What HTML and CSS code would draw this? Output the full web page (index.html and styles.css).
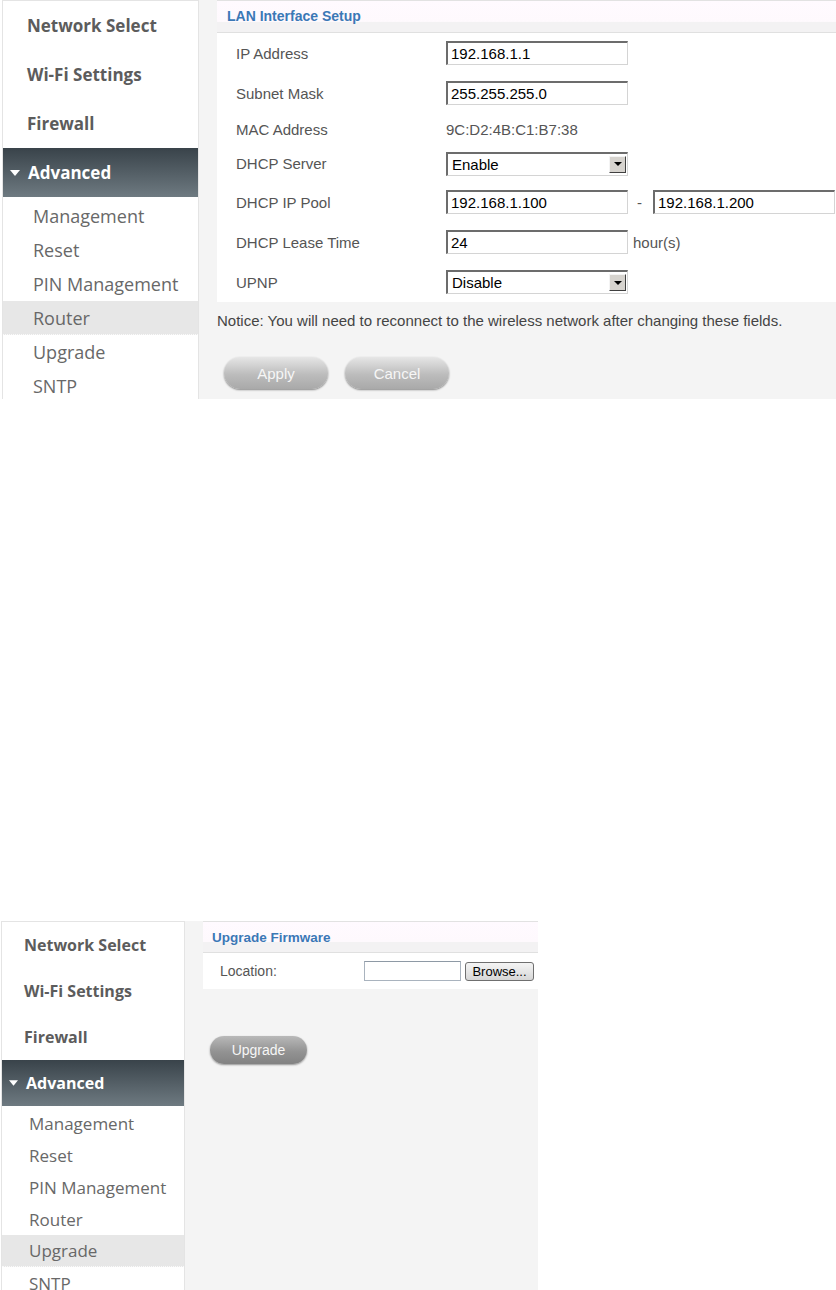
FILE: index.html
```html
<!DOCTYPE html>
<html lang="en">

<head>
    <meta charset="UTF-8">
    <meta name="viewport" content="width=device-width, initial-scale=1.0">
    <title>Router Settings</title>
    <link rel="stylesheet" href="styles.css">
</head>

<body>
    <!-- router / LAN settings page -->
    <div class="shot router">
        <nav class="sidebar">
            <a class="nav-main">Network Select</a>
            <a class="nav-main">Wi-Fi Settings</a>
            <a class="nav-main">Firewall</a>
            <div class="nav-group">
                <svg class="caret" viewBox="0 0 10 6"><polygon points="0,0 10,0 5,6" fill="#fff" /></svg>
                Advanced
            </div>
            <a class="nav-sub">Management</a>
            <a class="nav-sub">Reset</a>
            <a class="nav-sub">PIN Management</a>
            <a class="nav-sub active">Router</a>
            <a class="nav-sub">Upgrade</a>
            <a class="nav-sub">SNTP</a>
        </nav>
        <main class="content">
            <div class="panel">
                <div class="panel-head">LAN Interface Setup</div>
                <div class="panel-body">
                    <div class="row h40">
                        <span class="label">IP Address</span>
                        <input class="text" type="text" value="192.168.1.1">
                    </div>
                    <div class="row h40">
                        <span class="label">Subnet Mask</span>
                        <input class="text" type="text" value="255.255.255.0">
                    </div>
                    <div class="row h32">
                        <span class="label">MAC Address</span>
                        <span class="value">9C:D2:4B:C1:B7:38</span>
                    </div>
                    <div class="row h37">
                        <span class="label">DHCP Server</span>
                        <div class="select">
                            <span>Enable</span>
                            <span class="drop"><i></i></span>
                        </div>
                    </div>
                    <div class="row h40">
                        <span class="label">DHCP IP Pool</span>
                        <input class="text" type="text" value="192.168.1.100">
                        <span class="dash">-</span>
                        <input class="text" type="text" value="192.168.1.200">
                    </div>
                    <div class="row h40">
                        <span class="label">DHCP Lease Time</span>
                        <input class="text" type="text" value="24">
                        <span class="unit">hour(s)</span>
                    </div>
                    <div class="row h40">
                        <span class="label">UPNP</span>
                        <div class="select">
                            <span>Disable</span>
                            <span class="drop"><i></i></span>
                        </div>
                    </div>
                </div>
            </div>
            <p class="notice">Notice: You will need to reconnect to the wireless network after changing these fields.</p>
            <div class="actions">
                <button class="pill light">Apply</button>
                <button class="pill light">Cancel</button>
            </div>
        </main>
    </div>

    <!-- upgrade firmware page -->
    <div class="shot upgrade">
        <nav class="sidebar">
            <a class="nav-main">Network Select</a>
            <a class="nav-main">Wi-Fi Settings</a>
            <a class="nav-main">Firewall</a>
            <div class="nav-group">
                <svg class="caret" viewBox="0 0 10 6"><polygon points="0,0 10,0 5,6" fill="#fff" /></svg>
                Advanced
            </div>
            <a class="nav-sub">Management</a>
            <a class="nav-sub">Reset</a>
            <a class="nav-sub">PIN Management</a>
            <a class="nav-sub">Router</a>
            <a class="nav-sub active">Upgrade</a>
            <a class="nav-sub">SNTP</a>
        </nav>
        <main class="content">
            <div class="panel">
                <div class="panel-head">Upgrade Firmware</div>
                <div class="panel-body">
                    <div class="row h36">
                        <span class="label">Location:</span>
                        <input class="file" type="text" value="">
                        <button class="browse">Browse...</button>
                    </div>
                </div>
            </div>
            <div class="actions">
                <button class="pill dark">Upgrade</button>
            </div>
        </main>
    </div>
</body>

</html>
```

FILE: styles.css
```css
* {
    margin: 0;
    padding: 0;
    box-sizing: border-box;
}

body {
    background: #fff;
    font-family: "Liberation Sans", Arial, sans-serif;
}

.shot {
    display: flex;
    overflow: hidden;
}

/* sidebar */
.sidebar {
    flex: none;
    background: #fff;
    border: 1px solid #e4e4e4;
    border-bottom: none;
    font-family: "Open Sans", sans-serif;
}

.nav-main {
    display: flex;
    align-items: center;
    font-weight: 700;
    color: #5c5c5c;
}

.nav-group {
    display: flex;
    align-items: center;
    background: linear-gradient(#39434a, #6e7a81);
    color: #fff;
    font-weight: 700;
}

.nav-sub {
    display: flex;
    align-items: center;
    color: #686868;
}

.nav-sub.active {
    background: #e7e7e7;
    border-bottom: 1px dotted #fafafa;
}

/* content */
.content {
    flex: 1;
    background: #f4f4f4;
    padding-left: 18px;
}

.panel {
    background: #fff;
}

.panel-head {
    border-top: 1px solid #e2e2e2;
    border-bottom: 1px solid #e0e0e0;
    background: linear-gradient(#fffaff 0, #fef9fd 66%, #f3f2f3 68%, #f3f2f3 100%);
    color: #3b78b6;
    font-weight: 700;
}

.row {
    display: flex;
    align-items: center;
}

.h32 { height: 32px; }
.h36 { height: 36px; }
.h37 { height: 37px; }
.h40 { height: 40px; }

.label {
    flex: none;
    color: #555;
}

.value,
.unit,
.dash {
    color: #555;
    font-size: 15px;
}

.text,
.select {
    width: 182px;
    height: 24px;
    border: 1px solid #d4d4d4;
    border-top: 2px solid #6c6c6c;
    border-left: 2px solid #6c6c6c;
    background: #fff;
    font-family: "Liberation Sans", Arial, sans-serif;
    font-size: 15px;
    color: #000;
}

.text {
    padding-left: 3px;
    outline: none;
}

.select {
    display: flex;
    align-items: center;
    justify-content: space-between;
    padding-left: 4px;
    padding-right: 1px;
}

.drop {
    width: 17px;
    height: 17px;
    background: #d6d3ce;
    border: 1px solid;
    border-color: #f4f4f4 #404040 #404040 #f4f4f4;
    display: flex;
    align-items: center;
    justify-content: center;
}

.drop i {
    border-left: 4px solid transparent;
    border-right: 4px solid transparent;
    border-top: 4px solid #000;
}

.dash {
    margin: 0 11px 0 9px;
}

.unit {
    margin-left: 5px;
}

.notice {
    margin-top: 10px;
    font-size: 15px;
    line-height: 18px;
    color: #444;
}

.actions {
    display: flex;
}

.pill {
    border: none;
    font-family: "Liberation Sans", Arial, sans-serif;
    color: #f6f6f6;
    cursor: pointer;
}

.pill.light {
    width: 104px;
    height: 32px;
    border-radius: 16px;
    font-size: 15px;
    background: linear-gradient(#e6e6e6, #bcbcbc 55%, #a9a9a9);
    box-shadow: 0 1px 2px rgba(0, 0, 0, 0.45);
}

.pill.dark {
    width: 97px;
    height: 28px;
    border-radius: 14px;
    font-size: 14px;
    background: linear-gradient(#b9b9b9, #939393 55%, #828282);
    box-shadow: 0 1px 2px rgba(0, 0, 0, 0.4);
}

/* router page sizes */
.router {
    width: 836px;
    height: 399px;
    padding-left: 2px;
}

.router .sidebar {
    width: 197px;
}

.router .nav-main {
    height: 49px;
    padding-left: 24px;
    font-size: 17px;
}

.router .nav-group {
    height: 49px;
    margin-bottom: 2px;
    padding-left: 7px;
    font-size: 17px;
}

.router .caret {
    width: 10px;
    height: 6px;
    margin-right: 8px;
}

.router .nav-sub {
    height: 34px;
    padding-left: 30px;
    font-size: 18px;
}

.router .panel-head {
    height: 33px;
    line-height: 31px;
    padding-left: 10px;
    font-size: 14px;
}

.router .label {
    width: 229px;
    padding-left: 19px;
    font-size: 15px;
}

.router .actions {
    margin-top: 27px;
    padding-left: 7px;
    gap: 17px;
}

/* upgrade page sizes */
.upgrade {
    width: 538px;
    height: 369px;
    margin-top: 522px;
    padding-left: 1px;
}

.upgrade .sidebar {
    width: 184px;
}

.upgrade .nav-main {
    height: 46px;
    padding-left: 22px;
    font-size: 16px;
}

.upgrade .nav-group {
    height: 46px;
    margin-bottom: 1px;
    padding-left: 7px;
    font-size: 16px;
}

.upgrade .caret {
    width: 9px;
    height: 6px;
    margin-right: 8px;
}

.upgrade .nav-sub {
    height: 32px;
    padding-left: 27px;
    font-size: 17px;
}

.upgrade .panel-head {
    height: 32px;
    line-height: 32px;
    padding-left: 9px;
    font-size: 13.5px;
}

.upgrade .label {
    width: 161px;
    padding-left: 17px;
    font-size: 14px;
}

.file {
    width: 97px;
    height: 20px;
    border: 1px solid #a9b3be;
    border-top-color: #8e99a5;
    outline: none;
}

.browse {
    margin-left: 4px;
    width: 69px;
    height: 19px;
    border: 1px solid #6f6f6f;
    border-radius: 3px;
    background: linear-gradient(#f4f4f4, #e6e6e6 50%, #d6d6d6);
    font-family: "Liberation Sans", Arial, sans-serif;
    font-size: 13px;
    color: #000;
}

.upgrade .actions {
    margin-top: 47px;
    padding-left: 7px;
}
```
